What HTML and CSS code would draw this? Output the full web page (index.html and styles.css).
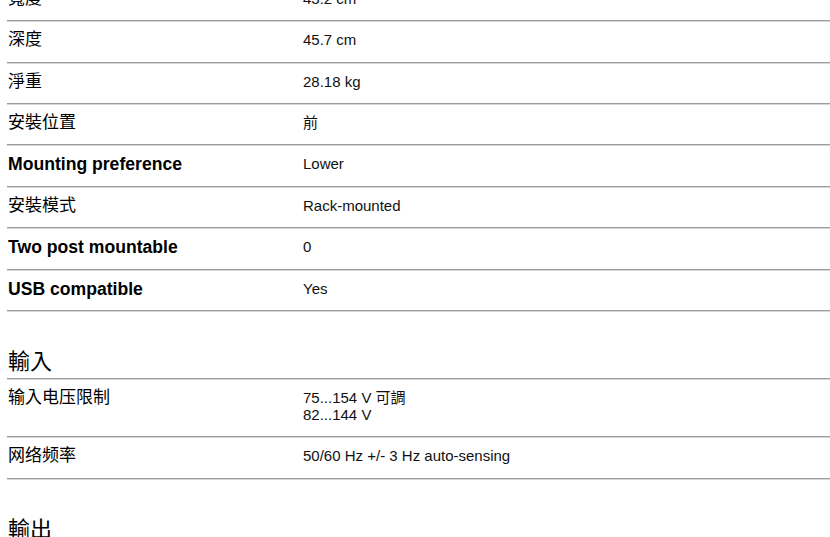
FILE: index.html
```html
<!DOCTYPE html>
<html lang="zh-Hant">
<head>
<meta charset="utf-8">
<title>Specifications</title>
<link rel="stylesheet" href="styles.css">
</head>
<body>
<div class="page">
  <section class="group">
    <div class="row"><div class="label">寬度</div><div class="value">43.2 cm</div></div>
    <div class="row"><div class="label">深度</div><div class="value">45.7 cm</div></div>
    <div class="row"><div class="label">淨重</div><div class="value">28.18 kg</div></div>
    <div class="row"><div class="label">安裝位置</div><div class="value">前</div></div>
    <div class="row"><div class="label en">Mounting preference</div><div class="value">Lower</div></div>
    <div class="row"><div class="label">安裝模式</div><div class="value">Rack-mounted</div></div>
    <div class="row"><div class="label en">Two post mountable</div><div class="value">0</div></div>
    <div class="row"><div class="label en">USB compatible</div><div class="value">Yes</div></div>
  </section>

  <section class="group">
    <h2 class="heading">輸入</h2>
    <div class="row"><div class="label">输入电压限制</div><div class="value multi">75...154 V 可調<br>82...144 V</div></div>
    <div class="row"><div class="label">网络频率</div><div class="value">50/60 Hz +/- 3 Hz auto-sensing</div></div>
  </section>

  <section class="group">
    <h2 class="heading">輸出</h2>
  </section>
</div>
</body>
</html>
```

FILE: styles.css
```css
html, body {
  margin: 0;
  padding: 0;
  background: #ffffff;
}

body {
  font-family: "Liberation Sans", Arial, "Noto Sans CJK TC", sans-serif;
  color: #000;
  overflow: hidden;
}

.page {
  margin-top: -20px;
  margin-left: 7px;
}

.group {
  display: flex;
  flex-direction: column;
}

.group + .group {
  margin-top: 37px;
}

.row {
  display: flex;
  align-items: flex-start;
  border-bottom: 1px solid #9c9c9c;
  box-shadow: 0 1px 0 #d6d6d6;
  padding: 10px 0 12.36px;
}

.label {
  width: 295px;
  flex: none;
  padding-left: 1px;
  font-family: "Liberation Sans", Arial, "Noto Sans CJK TC", sans-serif;
  font-size: 17px;
  line-height: 18px;
  color: #000;
}

.label.en {
  font-weight: bold;
  font-size: 17.6px;
}

.value {
  flex: 1;
  font-family: "Liberation Sans", Arial, "Noto Sans CJK TC", sans-serif;
  font-size: 15px;
  line-height: 18px;
  color: #111;
}

.value.multi {
  line-height: 17.5px;
}

.heading {
  margin: 0;
  padding: 0 0 2px 1px;
  font-family: "Liberation Sans", Arial, "Noto Sans CJK TC", sans-serif;
  font-weight: normal;
  font-size: 22px;
  line-height: 28px;
  color: #000;
  border-bottom: 1px solid #9c9c9c;
  box-shadow: 0 1px 0 #d6d6d6;
}
```
